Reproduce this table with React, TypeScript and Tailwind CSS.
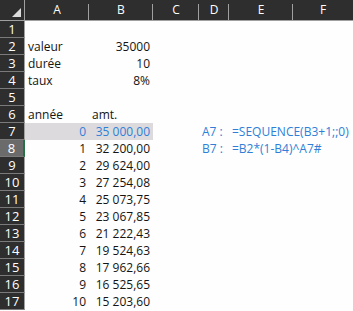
import React from 'react';

const cols = ['A', 'B', 'C', 'D', 'E', 'F'];

const amounts = [
  '35 000,00',
  '32 200,00',
  '29 624,00',
  '27 254,08',
  '25 073,75',
  '23 067,85',
  '21 222,43',
  '19 524,63',
  '17 962,66',
  '16 525,65',
  '15 203,60',
];

type Row = { a?: string; aRight?: boolean; b?: string; d?: string; e?: string };

const rows: Row[] = [
  {},
  { a: 'valeur', b: '35000' },
  { a: 'durée', b: '10' },
  { a: 'taux', b: '8%' },
  {},
  { a: 'année', b: 'amt.' },
  ...amounts.map((v, i) => ({ a: String(i), aRight: true, b: v })),
];

rows[6].d = 'A7 :';
rows[6].e = '=SEQUENCE(B3+1;;0)';
rows[7].d = 'B7 :';
rows[7].e = '=B2*(1-B4)^A7#';

export default function App() {
  return (
    <div className="w-[353px] h-[311px] overflow-hidden bg-[#fdfefd] text-[12px] text-[#141414] font-['Open_Sans',sans-serif] leading-none">
      {/* column headers */}
      <div className="grid grid-cols-[25px_64px_64px_46px_30px_64px_1fr] h-[21px] bg-[#2d2e2d] text-white border-b border-[#a0a0a0]">
        <div className="relative border-r border-[#a0a0a0]">
          <div className="absolute right-[3px] bottom-[3px] w-0 h-0 border-l-[9px] border-l-transparent border-b-[9px] border-b-[#dcdcdc]" />
        </div>
        {cols.map((c, i) => (
          <div key={c} className="flex items-center justify-center relative">
            {c}
            {i < cols.length - 1 && <div className="absolute right-0 top-[4px] bottom-0 w-px bg-[#a0a0a0]" />}
          </div>
        ))}
      </div>

      {rows.map((r, i) => {
        const sel = i === 7;
        const hl = i === 6;
        return (
          <div key={i} className="grid grid-cols-[25px_64px_64px_46px_30px_64px_1fr] h-[17px]">
            <div
              className={`flex items-center justify-center text-white text-[13px] border-b border-[#7a7a7a] ${
                sel ? 'bg-[#6b6b6b] border-r-2 border-r-[#217346]' : 'bg-[#2d2e2d] border-r border-r-[#a0a0a0]'
              }`}
            >
              {i + 1}
            </div>
            <div
              className={`flex items-center px-[3px] ${r.aRight ? 'justify-end' : ''} ${hl ? 'bg-[#dcdadd] text-[#2f7fd8]' : ''}`}
            >
              {r.a}
            </div>
            <div
              className={`flex items-center px-[3px] ${i === 5 ? '' : 'justify-end'} ${hl ? 'bg-[#dcdadd] text-[#2f7fd8]' : ''}`}
            >
              {r.b}
            </div>
            <div />
            <div className="flex items-center px-[3px] text-[#2f7fd8] whitespace-nowrap">{r.d}</div>
            <div className="flex items-center px-[3px] text-[#2f7fd8] whitespace-nowrap col-span-2">{r.e}</div>
          </div>
        );
      })}
    </div>
  );
}
